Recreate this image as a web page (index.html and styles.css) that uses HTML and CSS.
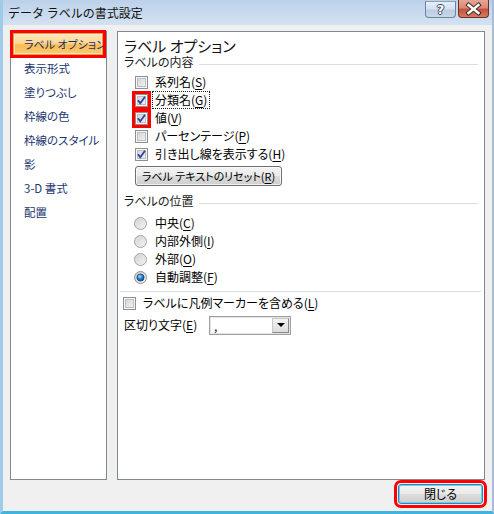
FILE: index.html
```html
<!DOCTYPE html>
<html lang="ja">
<head>
<meta charset="utf-8">
<title>データ ラベルの書式設定</title>
<link rel="stylesheet" href="styles.css">
</head>
<body>
<svg class="defs" width="0" height="0" aria-hidden="true">
  <defs>
    <linearGradient id="rg" x1="0" y1="0" x2="1" y2="1">
      <stop offset="0" stop-color="#c9cbcf"/>
      <stop offset="1" stop-color="#fbfbfb"/>
    </linearGradient>
    <radialGradient id="rdot" cx="0.4" cy="0.35" r="0.7">
      <stop offset="0" stop-color="#a9e2ff"/>
      <stop offset="0.45" stop-color="#2f8ad8"/>
      <stop offset="1" stop-color="#0b3f86"/>
    </radialGradient>
  </defs>
</svg>
<div class="window">
  <div class="titlebar">
    <span class="title">データ ラベルの書式設定</span>
    <div class="caption-btns">
      <span class="cap help">?</span>
      <span class="cap close">
        <svg width="29" height="16" viewBox="0 0 29 16">
          <path d="M9.5 4 L19.5 12 M19.5 4 L9.5 12" stroke="#3b2a28" stroke-width="4.4" stroke-linecap="square"/>
          <path d="M9.5 4 L19.5 12 M19.5 4 L9.5 12" stroke="#ffffff" stroke-width="2.4" stroke-linecap="square"/>
        </svg>
      </span>
    </div>
  </div>

  <div class="main">
    <ul class="nav">
      <li class="active">ラベル オプション</li>
      <li>表示形式</li>
      <li>塗りつぶし</li>
      <li>枠線の色</li>
      <li>枠線のスタイル</li>
      <li>影</li>
      <li>3-D 書式</li>
      <li>配置</li>
    </ul>

    <div class="pane">
      <div class="pane-title">ラベル オプション</div>

      <div class="group"><span>ラベルの内容</span><i></i></div>
      <div class="opts">
        <div class="row"><span class="cb"></span><span class="lbl">系列名(<u>S</u>)</span></div>
        <div class="row"><span class="cb on mark"><svg width="11" height="11" viewBox="0 0 11 11"><path d="M2 5.2 L4.3 8.2 L9 1.8" fill="none" stroke="#2a43a0" stroke-width="1.8"/></svg></span><span class="lbl focus">分類名(<u>G</u>)</span></div>
        <div class="row"><span class="cb on mark"><svg width="11" height="11" viewBox="0 0 11 11"><path d="M2 5.2 L4.3 8.2 L9 1.8" fill="none" stroke="#2a43a0" stroke-width="1.8"/></svg></span><span class="lbl">値(<u>V</u>)</span></div>
        <div class="row"><span class="cb"></span><span class="lbl">パーセンテージ(<u>P</u>)</span></div>
        <div class="row"><span class="cb on"><svg width="11" height="11" viewBox="0 0 11 11"><path d="M2 5.2 L4.3 8.2 L9 1.8" fill="none" stroke="#2a43a0" stroke-width="1.8"/></svg></span><span class="lbl">引き出し線を表示する(<u>H</u>)</span></div>
      </div>
      <button class="btn reset" type="button">ラベル テキストのリセット(<u>R</u>)</button>

      <div class="group group2"><span>ラベルの位置</span><i></i></div>
      <div class="radios">
        <div class="row"><svg class="rb" width="13" height="13" viewBox="0 0 13 13"><circle cx="6.5" cy="6.5" r="6" fill="url(#rg)" stroke="#a2a2a2"/><circle cx="6.5" cy="6.5" r="4.6" fill="none" stroke="#e2e2e2"/></svg><span class="lbl">中央(<u>C</u>)</span></div>
        <div class="row"><svg class="rb" width="13" height="13" viewBox="0 0 13 13"><circle cx="6.5" cy="6.5" r="6" fill="url(#rg)" stroke="#a2a2a2"/><circle cx="6.5" cy="6.5" r="4.6" fill="none" stroke="#e2e2e2"/></svg><span class="lbl">内部外側(<u>I</u>)</span></div>
        <div class="row"><svg class="rb" width="13" height="13" viewBox="0 0 13 13"><circle cx="6.5" cy="6.5" r="6" fill="url(#rg)" stroke="#a2a2a2"/><circle cx="6.5" cy="6.5" r="4.6" fill="none" stroke="#e2e2e2"/></svg><span class="lbl">外部(<u>O</u>)</span></div>
        <div class="row"><svg class="rb" width="13" height="13" viewBox="0 0 13 13"><circle cx="6.5" cy="6.5" r="6" fill="url(#rg)" stroke="#8e8e8e"/><circle cx="6.5" cy="6.5" r="3.6" fill="url(#rdot)" stroke="#1c3f70" stroke-width="0.8"/></svg><span class="lbl">自動調整(<u>F</u>)</span></div>
      </div>

      <div class="sep"></div>
      <div class="row legend"><span class="cb"></span><span class="lbl">ラベルに凡例マーカーを含める(<u>L</u>)</span></div>
      <div class="row delim">
        <span class="delim-lbl">区切り文字(<u>E</u>)</span>
        <div class="combo"><span class="combo-val">,</span><span class="combo-btn"><i></i></span></div>
      </div>
    </div>
  </div>

  <div class="footer">
    <button class="btn close-btn" type="button">閉じる</button>
  </div>
</div>
</body>
</html>
```

FILE: styles.css
```css
* { box-sizing: border-box; }

body {
  margin: 0;
  font-family: "Noto Sans CJK JP", "Noto Sans", sans-serif;
  font-size: 12px;
  color: #000;
  font-feature-settings: "palt";
  background: #f0f0f0;
}

.defs { display: block; width: 0; height: 0; overflow: hidden; }

.window {
  width: 494px;
  height: 514px;
  display: flex;
  flex-direction: column;
  background: #f0f0f0;
  border-left: 3px solid #9fcbe8;
  border-right: 2px solid #a9bed6;
  border-bottom: 3px solid #3fb4df;
}

/* ---------- title bar ---------- */
.titlebar {
  flex: none;
  height: 25px;
  display: flex;
  justify-content: space-between;
  background: linear-gradient(#bcd1e9, #d3e2f2);
}

.title {
  padding-left: 5px;
  line-height: 25px;
  font-feature-settings: normal;
  color: #111;
}

.caption-btns {
  display: flex;
  align-items: flex-start;
  gap: 2px;
  margin-right: 3px;
}

.cap {
  width: 31px;
  border-radius: 0 0 4px 4px;
  display: flex;
  align-items: center;
  justify-content: center;
}

.help {
  margin-top: 1px;
  height: 17px;
  border: 1px solid #6f829e;
  border-top-color: #8ea0b8;
  background: linear-gradient(#e6eef8 0%, #d3e0ee 48%, #bccde1 52%, #c9d9ea 100%);
  color: #fff;
  font-family: "DejaVu Sans", sans-serif;
  font-weight: bold;
  font-size: 13px;
  line-height: 15px;
  text-shadow: 1px 0 0 #3a4b66, -1px 0 0 #3a4b66, 0 1px 0 #3a4b66, 0 -1px 0 #3a4b66;
}

.close {
  height: 18px;
  border: 1px solid #6e2f25;
  border-top: none;
  background: linear-gradient(#e7a496 0%, #d98a78 45%, #c5523b 55%, #d47a63 100%);
}

.close svg { display: block; }

/* ---------- main ---------- */
.main {
  flex: none;
  display: flex;
  gap: 10px;
  padding: 6px 7px 0 7px;
}

.nav {
  list-style: none;
  margin: 0;
  padding: 1px;
  width: 97px;
  height: 449px;
  background: #fff;
  border: 1px solid #828790;
  font-size: 11.5px;
}

.nav li {
  height: 22px;
  line-height: 22px;
  margin: 0 2px 2px 1px;
  padding-left: 11px;
  color: #1b3570;
  white-space: nowrap;
}

.nav li.active {
  background: linear-gradient(#fde9bf 0%, #fcd896 45%, #f9bb55 55%, #fbcd72 100%);
  box-shadow: inset 0 0 0 1px #e2a449, inset 0 0 0 2px rgba(255, 246, 220, 0.6);
  outline: 3px solid #ff0000;
  color: #1b2f66;
  font-size: 11px;
}

.pane {
  width: 368px;
  height: 449px;
  background: #fff;
  border: 1px solid #828790;
  padding: 5px 6px 0 6px;
}

.pane-title {
  font-size: 15px;
  line-height: 18px;
  color: #111;
}

.group {
  display: flex;
  align-items: center;
  height: 14px;
  line-height: 14px;
  color: #1a1a1a;
}

.group i {
  flex: 1;
  height: 1px;
  background: #d5dfe5;
  margin: 4px 0 0 6px;
}

.group2 { margin-top: 8px; }

.row {
  display: flex;
  align-items: center;
  height: 18px;
  gap: 5px;
}

.lbl {
  line-height: 16px;
  padding: 0 2px;
  white-space: nowrap;
}

.focus { outline: 1px dotted #222; }

u { text-decoration-thickness: 1px; text-underline-offset: 2px; }

.opts { padding: 4px 0 0 11px; }

.cb {
  flex: none;
  width: 13px;
  height: 13px;
  border: 1px solid #8e8f8f;
  background: linear-gradient(135deg, #cdd0d4, #f7f7f7);
  box-shadow: inset 0 0 0 1px #f6f6f6, inset 0 0 0 2px #bcc0c5;
}

.cb svg { display: block; }

.mark { outline: 3px solid #ff0000; outline-offset: 0; }

.btn {
  font-family: inherit;
  font-size: 12px;
  font-feature-settings: "palt";
  color: #000;
  border: 1px solid #707070;
  border-radius: 3px;
  background: linear-gradient(#f2f2f2 0%, #ebebeb 50%, #dddddd 50%, #cfcfcf 100%);
  box-shadow: inset 0 0 0 1px rgba(255, 255, 255, 0.7);
  padding: 0;
  line-height: 18px;
  white-space: nowrap;
}

.reset {
  display: block;
  width: 147px;
  height: 20px;
  margin: 3px 0 0 11px;
  font-size: 11px;
}

.radios { padding: 6px 0 0 10px; }

.radios .row { gap: 6px; }

.rb { display: block; flex: none; }

.sep {
  height: 1px;
  background: #d5dfe5;
  margin: 5px -3px 0 -4px;
}

.legend {
  height: 22px;
  margin-left: -1px;
}

.delim {
  height: 22px;
  gap: 0;
}

.delim-lbl {
  width: 85px;
  line-height: 16px;
  white-space: nowrap;
}

.combo {
  width: 82px;
  height: 19px;
  border: 1px solid #a0a0a0;
  box-shadow: inset 0 0 0 1px #e4e4e4;
  background: #fff;
  display: flex;
  align-items: stretch;
  padding: 1px;
}

.combo-val {
  flex: 1;
  padding-left: 3px;
  line-height: 16px;
}

.combo-btn {
  width: 17px;
  border: 1px solid #888;
  border-top-color: #c8c8c8;
  border-left-color: #c8c8c8;
  background: linear-gradient(#f3f3f3, #dcdcdc);
  display: flex;
  align-items: center;
  justify-content: center;
}

.combo-btn i {
  width: 0;
  height: 0;
  border-left: 4px solid transparent;
  border-right: 4px solid transparent;
  border-top: 4px solid #000;
}

/* ---------- footer ---------- */
.footer {
  flex: 1;
  display: flex;
  justify-content: flex-end;
  align-items: flex-start;
  padding: 4px 9px 0 0;
}

.close-btn {
  width: 85px;
  height: 20px;
  border-color: #3c7fb1;
  box-shadow: inset 0 0 0 1px #58d6fb;
  outline: 3px solid #ff0000;
  outline-offset: 1px;
}
```
